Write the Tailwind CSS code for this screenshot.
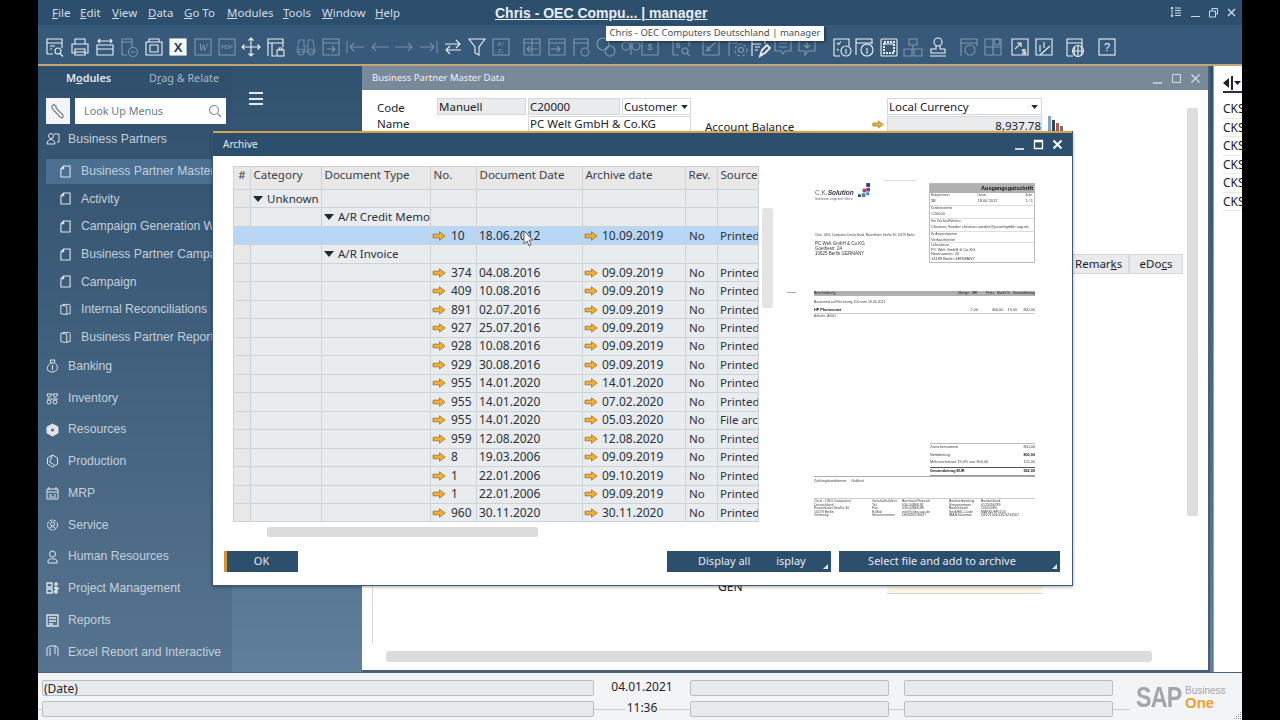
<!DOCTYPE html>
<html>
<head>
<meta charset="utf-8">
<script src="https://cdn.jsdelivr.net/npm/@tailwindcss/browser@4"></script>
</head>
<body class="bg-black">
<svg class="hidden">
  <symbol id="arr" viewBox="0 0 14 10"><path d="M1 3.2h6.5V.8L13 5 7.5 9.2V6.8H1z" fill="#f2ae35" stroke="#9c7426" stroke-width="0.8"/></symbol>
  <symbol id="doc" viewBox="0 0 12 14"><path d="M4 1h7v12H1V4zM4 1v3H1" fill="none" stroke="#dfe6ec" stroke-width="1.2"/></symbol>
  <symbol id="doc2" viewBox="0 0 13 14"><path d="M1 2l7 1v10l-7-1zM3 1h8l1 1v10H8" fill="none" stroke="#dfe6ec" stroke-width="1.1"/></symbol>
  <symbol id="tri" viewBox="0 0 10 6"><path d="M0 0h10L5 6z" fill="#1f2a33"/></symbol>
</svg>
<div class="relative w-[1280px] h-[720px] overflow-hidden bg-black">
 <div class="relative ml-[38px] w-[1204px] h-[720px] flex flex-col bg-[#f2f3f4] font-['Noto_Sans',sans-serif]">

  <!-- menu bar -->
  <header class="relative h-[25px] bg-[#2d4f6e] flex items-center pl-[14px] pt-px text-[11.5px] text-[#d3dce4] shrink-0">
    <nav class="flex">
      <span class="w-[28px]"><u>F</u>ile</span>
      <span class="w-[32px]"><u>E</u>dit</span>
      <span class="w-[36px]"><u>V</u>iew</span>
      <span class="w-[36px]"><u>D</u>ata</span>
      <span class="w-[43px]"><u>G</u>o To</span>
      <span class="w-[56px]"><u>M</u>odules</span>
      <span class="w-[39px]"><u>T</u>ools</span>
      <span class="w-[53px]"><u>W</u>indow</span>
      <span><u>H</u>elp</span>
    </nav>
    <div class="absolute left-[457px] top-[3px] text-[14px] font-bold text-[#e8eef3] underline font-['Liberation_Sans',sans-serif] whitespace-nowrap">Chris - OEC Compu... | manager</div>
    <div class="absolute right-[5px] top-[6px] flex items-center gap-[6px] text-[#cfd9e2]">
      <svg width="12" height="12" viewBox="0 0 12 12" fill="none" stroke="currentColor"><path d="M2 1v10M1 3l1-2 1 2M1 9l1 2 1-2M5 2h6M5 4.500h6M5 7h6M5 9.500h6"/></svg>
      <svg class="ml-[2px]" width="12" height="12" viewBox="0 0 12 12" fill="none" stroke="currentColor"><path d="M1 10.500h9"/></svg>
      <svg width="11" height="11" viewBox="0 0 11 11" fill="none" stroke="currentColor"><path d="M1.500 4h6v6h-6zM4 4V1.500h5.500V7H8"/></svg>
      <svg class="ml-[1px]" width="11" height="11" viewBox="0 0 11 11" fill="none" stroke="currentColor" stroke-width="1.400"><path d="M2 2l7 7M9 2l-7 7"/></svg>
    </div>
  </header>

  <!-- toolbar -->
  <div class="relative h-[39px] bg-[#37597a] flex items-center pl-[6px] pt-[5px] shrink-0 text-[#eef2f5] [&>svg]:w-[22px] [&>svg]:h-[22px] [&>svg]:shrink-0 [&>svg]:fill-none [&>svg]:stroke-current [&>svg]:[stroke-width:1.1]">
    <svg viewBox="0 0 22 22"><path d="M9 18H3V3h15v9M3 7h15M6 10h5M6 13h2"/><circle cx="14" cy="15" r="3"/><path d="M16 17.500l3 3"/></svg>
    <svg class="ml-[3px]" viewBox="0 0 22 22"><path d="M6 8V3h10v5M6 17H3V8h16v9h-3M6 13h10v6H6zM6 16h10"/></svg>
    <svg class="ml-[3px]" viewBox="0 0 22 22"><path d="M3 9h16v10H3zM3 13h16M4 5h14M6 3L4 5l2 2M16 3l2 2-2 2"/></svg>
    <svg class="ml-[2px] opacity-40" viewBox="0 0 22 22"><path d="M4 19V3h10v8M4 6h10M4 19h5"/><circle cx="15" cy="16" r="4.500"/><path d="M13 16h4"/></svg>
    <svg class="ml-[3px]" viewBox="0 0 22 22"><path d="M6 3h10v3H6zM3 6h16v13H3zM7 9h8v7H7z"/></svg>
    <svg class="ml-[2px]" viewBox="0 0 22 22"><rect x="3" y="3" width="16" height="16" fill="#f5f7f9" stroke="#fff"/><text x="11" y="16" text-anchor="middle" font-family="Liberation Sans" font-weight="700" font-size="13" fill="#23405c" stroke="none">X</text></svg>
    <svg class="ml-[3px] opacity-40" viewBox="0 0 22 22"><rect x="3" y="3" width="16" height="16"/><text x="11" y="15" text-anchor="middle" font-family="Liberation Serif" font-style="italic" font-size="11" fill="#fff" stroke="none">W</text></svg>
    <svg class="ml-[2px] opacity-40" viewBox="0 0 22 22"><rect x="3" y="3" width="16" height="16"/><text x="11" y="13" text-anchor="middle" font-family="Liberation Sans" font-size="6" fill="#fff" stroke="none">PDF</text></svg>
    <svg class="ml-[2px]" viewBox="0 0 22 22"><path d="M11 2v18M2 11h18M8.500 4.500L11 2l2.500 2.500M8.500 17.500L11 20l2.500-2.500M4.500 8.500L2 11l2.500 2.500M17.500 8.500L20 11l-2.500 2.500"/></svg>
    <svg class="ml-[3px]" viewBox="0 0 22 22"><path d="M3 20V3h15v8M3 7h15M7 7v13h4"/><rect x="12" y="14" width="7" height="6" fill="#37597a"/><path d="M14 14v-2h3v2"/></svg>
    <svg class="ml-[8px] opacity-30" viewBox="0 0 22 22"><path d="M4 4h5v6h4V4h5M4 4L2 16h8l-1-6M18 4l2 12h-8l1-6"/><circle cx="6" cy="16" r="3"/><circle cx="16" cy="16" r="3"/></svg>
    <svg class="ml-[3px] opacity-40" viewBox="0 0 22 22"><path d="M3 3h16v16H3zM3 7h16M7 13h8M12 10l3 3-3 3"/></svg>
    <svg class="ml-[2px] opacity-35" viewBox="0 0 22 22"><path d="M3 5v12M20 11H6M10 7l-4 4 4 4"/></svg>
    <svg class="ml-[3px] opacity-35" viewBox="0 0 22 22"><path d="M20 11H3M7 7l-4 4 4 4"/></svg>
    <svg class="ml-[2px] opacity-35" viewBox="0 0 22 22"><path d="M2 11h17M15 7l4 4-4 4"/></svg>
    <svg class="ml-[3px] opacity-35" viewBox="0 0 22 22"><path d="M19 5v12M2 11h14M12 7l4 4-4 4"/></svg>
    <svg class="ml-[2px]" viewBox="0 0 22 22"><path d="M3 8h15M14 4l4 4-4 4M19 14H4M8 10l-4 4 4 4"/></svg>
    <svg class="ml-[2px]" viewBox="0 0 22 22"><path d="M3 3h16l-6 8v8l-4-2v-6z"/></svg>
    <svg class="ml-[2px] opacity-40" viewBox="0 0 22 22"><rect x="3" y="3" width="16" height="16"/><text x="11" y="10" text-anchor="middle" font-family="Liberation Sans" font-size="6" fill="#fff" stroke="none">A↑</text><text x="11" y="17" text-anchor="middle" font-family="Liberation Sans" font-size="6" fill="#fff" stroke="none">Z↓</text></svg>
    <svg class="ml-[9px] opacity-40" viewBox="0 0 22 22"><path d="M3 3h16v16H3zM11 3v16M3 7h16M17 13H6M9 10l-3 3 3 3"/></svg>
    <svg class="ml-[3px] opacity-40" viewBox="0 0 22 22"><path d="M3 3h16v16H3zM3 7h16M5 13h9M11 10l3 3-3 3"/></svg>
    <svg class="ml-[3px] opacity-40" viewBox="0 0 22 22"><path d="M3 20V3h14v9M3 7h14"/><circle cx="14" cy="16" r="4"/></svg>
    <svg class="ml-[2px] opacity-40" viewBox="0 0 22 22"><circle cx="8" cy="8" r="6"/><circle cx="15" cy="15" r="5"/></svg>
    <svg class="ml-[3px] opacity-40" viewBox="0 0 22 22"><circle cx="6" cy="10" r="4"/><path d="M11 3v16"/><circle cx="16" cy="10" r="4"/></svg>
    <svg class="ml-[-3px] opacity-40" viewBox="0 0 22 22"><path d="M3 3h16v16H3z"/><text x="11" y="14" text-anchor="middle" font-family="Liberation Sans" font-size="9" fill="#fff" stroke="none">$</text></svg>
    <svg class="ml-[9px] opacity-40" viewBox="0 0 22 22"><path d="M9 19H3V3h16v7"/><text x="8" y="12" text-anchor="middle" font-family="Liberation Sans" font-size="8" fill="#fff" stroke="none">$</text><circle cx="15" cy="15" r="3"/><path d="M17 17l3 3"/></svg>
    <svg class="ml-[8px] opacity-40" viewBox="0 0 22 22"><path d="M3 3h16v16H3zM6 15L16 6M6 15l4-1-3-3"/></svg>
    <svg class="ml-[5px] opacity-40" viewBox="0 0 22 22"><path d="M2 20V3h9M2 7h9"/><circle cx="14" cy="14" r="2.500"/><circle cx="14" cy="14" r="6" stroke-dasharray="3 2"/></svg>
    <svg class="ml-[0px]" viewBox="0 0 22 22"><path d="M3 20V4h13v4M3 8h9M6 11h5M6 14h3"/><path d="M11 20l2-6 5-5 3 3-5 5z" stroke-width="1.800"/></svg>
    <svg class="ml-[1px] opacity-40" viewBox="0 0 22 22"><path d="M3 3h16v12h-6l-2 3-2-3H3zM7 7h8M7 11h8"/></svg>
    <svg class="ml-[2px] opacity-40" viewBox="0 0 22 22"><path d="M3 3h16v12H12l-3 4v-4H3zM11 6v6M8 9l3 3 3-3"/></svg>
    <svg class="ml-[13px]" viewBox="0 0 22 22"><path d="M3 9V3h15v7M3 20V9M3 20h6"/><path d="M6 7l1.500 1.500L10 5.500M6 13l1.500 1.500"/><circle cx="15" cy="15" r="5"/><path d="M15 13v5"/></svg>
    <svg class="ml-[0px]" viewBox="0 0 22 22"><path d="M3 19V3h16v5M3 7h16"/><circle cx="14" cy="14" r="6"/><path d="M14 12v6M14 9.800v.5"/></svg>
    <svg class="ml-[3px]" viewBox="0 0 22 22"><rect x="3" y="3" width="16" height="17" rx="1"/><rect x="6" y="6" width="10" height="11" stroke-dasharray="2 1" stroke-width="2"/><path d="M6 8h10"/></svg>
    <svg class="ml-[2px] opacity-40" viewBox="0 0 22 22"><path d="M7 3h8v6H7zM2 13h8v7H2zM12 13h8v7h-8zM11 9v4"/></svg>
    <svg class="ml-[3px]" viewBox="0 0 22 22"><circle cx="11" cy="6" r="4"/><path d="M9 10v3H4v4h14v-4h-5v-3M3 20h16"/></svg>
    <svg class="ml-[9px] opacity-40" viewBox="0 0 22 22"><path d="M3 20V3h16v7M3 7h16"/><circle cx="12" cy="14" r="5"/></svg>
    <svg class="ml-[2px] opacity-40" viewBox="0 0 22 22"><path d="M3 3h16v16H3zM11 3v16M3 11h16"/><circle cx="15" cy="6" r="3"/></svg>
    <svg class="ml-[5px]" viewBox="0 0 22 22"><path d="M3 3h16v16H3zM6 13l6-6M8 7h4v4"/><text x="15" y="18" text-anchor="middle" font-family="Liberation Sans" font-weight="700" font-size="8" fill="#fff" stroke="none">$</text></svg>
    <svg class="ml-[2px]" viewBox="0 0 22 22"><path d="M3 3h16v16H3zM7 9v7M11 6v6M7 19l10-9"/></svg>
    <svg class="ml-[9px]" viewBox="0 0 22 22"><path d="M3 20V3h15v8M3 7h15M3 20h6"/><circle cx="14" cy="15" r="5.500"/><path d="M8.500 15h11M14 9.500v11M11 11c-1.500 3-1.500 5 0 8M17 11c1.500 3 1.500 5 0 8"/></svg>
    <svg class="ml-[10px]" viewBox="0 0 22 22"><rect x="3" y="3" width="16" height="16"/><text x="11" y="15" text-anchor="middle" font-family="Liberation Sans" font-size="11" fill="#fff" stroke="none">?</text></svg>
    <div class="absolute left-[568px] top-[1px] h-[15px] w-[218px] bg-white shadow-[1px_1px_3px_rgba(0,0,0,.5)] flex items-center justify-center text-[9.5px] text-[#4a4f55] whitespace-nowrap">Chris - OEC Computers Deutschland | manager</div>
  </div>
  <div class="h-[2px] bg-[#c2a774] shrink-0"></div>

  <!-- main -->
  <main class="flex-1 min-h-0 flex bg-gradient-to-b from-[#30526f] to-[#5f7f9b]">
    <aside class="w-[194px] shrink-0 flex flex-col overflow-hidden bg-gradient-to-b from-[#2f4f6c] to-[#567490] font-['Liberation_Sans',sans-serif] text-[12.2px] text-[#c3cfda]">
     <div class="h-[590px] overflow-hidden flex flex-col">
      <div class="flex h-[24px] items-center font-['Noto_Sans',sans-serif] text-[10.8px] shrink-0 whitespace-nowrap">
        <span class="ml-[28px] font-semibold text-[#e3e9ee]">M<u>o</u>dules</span>
        <span class="ml-[38px] text-[#a9b8c6]">D<u>r</u>ag &amp; Relate</span>
      </div>
      <div class="flex mt-[8px] ml-[8px] gap-[5px] shrink-0">
        <div class="w-[24px] h-[26px] bg-[#f3f4f5] flex items-center justify-center">
          <svg width="16" height="16" viewBox="0 0 16 16" fill="none" stroke="#7a8086" stroke-width="1.200"><path d="M2 3l2-1.500L6 3v2l7 7v2l-1 1-2-1-6-6.500H4L2 5z"/></svg>
        </div>
        <div class="w-[151px] h-[26px] bg-white flex items-center justify-between pl-[9px] pr-[4px] font-['Noto_Sans',sans-serif] text-[10.8px] text-[#6f7a85]">
          <span>Look Up Menus</span>
          <svg width="14" height="14" viewBox="0 0 14 14" fill="none" stroke="#8a9199" stroke-width="1.200"><circle cx="6" cy="6" r="4.500"/><path d="M9.500 9.500L13 13"/></svg>
        </div>
      </div>
      <div class="flex items-center h-[30px] mt-[0px] pl-[8px] gap-[8px] shrink-0">
        <svg class="w-[14px] h-[14px] shrink-0" viewBox="0 0 14 14" fill="none" stroke="#dfe6ec"><circle cx="5" cy="4" r="2.500"/><path d="M1 12c0-6 8-6 8 0zM8 2h5v8h-2"/></svg>
        <span class="whitespace-nowrap">Business Partners</span>
      </div>
      <ul class="shrink-0 mt-[5px] [&>li]:flex [&>li]:items-center [&>li]:h-[27.7px] [&>li]:pl-[22px] [&>li]:gap-[10px] [&>li]:whitespace-nowrap [&_svg]:w-[11px] [&_svg]:h-[13px] [&_svg]:shrink-0">
        <li class="ml-[8px] !pl-[14px] !h-[25px] bg-[#4a6f91] mb-[1px]"><svg><use href="#doc"/></svg>Business Partner Master Data</li>
        <li><svg><use href="#doc"/></svg>Activity</li>
        <li><svg><use href="#doc"/></svg>Campaign Generation Wizard</li>
        <li><svg><use href="#doc"/></svg>Business Partner Campaign</li>
        <li><svg><use href="#doc"/></svg>Campaign</li>
        <li><svg><use href="#doc2"/></svg>Internal Reconciliations</li>
        <li><svg><use href="#doc2"/></svg>Business Partner Reports</li>
      </ul>
      <ul class="shrink-0 -mt-[1px] [&>li]:flex [&>li]:items-center [&>li]:h-[31.75px] [&>li]:pl-[8px] [&>li]:gap-[9px] [&>li]:whitespace-nowrap [&_svg]:w-[13px] [&_svg]:h-[14px] [&_svg]:shrink-0 [&_svg]:fill-none [&_svg]:stroke-[#dfe6ec]">
        <li><svg viewBox="0 0 13 14"><path d="M4 1h5L8 4H5zM5 4C0 7 0 13 6 13s7-6 3-9"/><path d="M6.500 6v5"/></svg>Banking</li>
        <li><svg viewBox="0 0 13 14"><path d="M1 3h5L4 6H2zM7 3h5l-2 3H8zM1 8h11"/><circle cx="3" cy="11" r="2"/><circle cx="9" cy="11" r="2"/></svg>Inventory</li>
        <li><svg viewBox="0 0 13 14"><path d="M6.500 1l5.500 3v6l-5.500 3L1 10V4z" fill="#dfe6ec"/><circle cx="6.500" cy="7" r="2" fill="#4b6b88"/></svg>Resources</li>
        <li><svg viewBox="0 0 13 14"><path d="M6.500 1l5 3v6l-5 3-5-3V4zM6.500 1l-3 7 5 3"/></svg>Production</li>
        <li><svg viewBox="0 0 13 14"><path d="M1 3h11v10H1zM3 1v3M10 1v3M1 6h11M3 9h3M8 9h2M3 11h7"/></svg>MRP</li>
        <li><svg viewBox="0 0 13 14"><circle cx="6.500" cy="7" r="5" stroke-dasharray="3 1"/><circle cx="6.500" cy="6" r="2"/><path d="M3 11c1-3 6-3 7 0"/></svg>Service</li>
        <li><svg viewBox="0 0 13 14"><circle cx="6.500" cy="4" r="3"/><path d="M2 13v-2c0-3 9-3 9 0v2z"/></svg>Human Resources</li>
        <li><svg viewBox="0 0 13 14" stroke-width="1.300"><path d="M1 2h5v4H1zM1 8h5v4H1zM8 3h4M8 7h4c1 2-4 2-4 4h4M10 1v12"/></svg>Project Management</li>
        <li><svg viewBox="0 0 13 14" stroke-width="1.300"><path d="M1 2h11v11H1zM3 5h7M3 8h7M3 11h4"/></svg>Reports</li>
        <li><svg viewBox="0 0 13 14"><path d="M1 13V3l3-2h6l2 2v10M4 13V3M9 1v8"/></svg>Excel Report and Interactive</li>
      </ul>
     </div>
    </aside>

    <div class="w-[130px] shrink-0 pt-[26px] pl-[17px]">
      <div class="w-[14px] h-[13px] border-y-[2px] border-[#e3e9ee] relative flex items-center"><div class="h-[2px] w-full bg-[#e3e9ee]"></div></div>
    </div>

    <!-- BP window -->
    <section class="relative w-[848px] shrink-0 bg-white flex flex-col border-b-[2px] border-r-[2px] border-[#4a5f72] text-[11.5px] text-[#1c2228]">
      <div class="h-[24px] bg-[#78899a] flex items-center justify-between pl-[10px] pr-[7px] text-[9.5px] text-[#eef1f4] shrink-0">
        <span>Business Partner Master Data</span>
        <div class="flex items-center gap-[8px] text-[#d3dae1]">
          <svg width="11" height="11" viewBox="0 0 11 11" fill="none" stroke="currentColor" stroke-width="1.500"><path d="M1 10h9"/></svg>
          <svg width="11" height="11" viewBox="0 0 11 11" fill="none" stroke="currentColor"><path d="M1.500 1.500h8v8h-8z"/></svg>
          <svg width="11" height="11" viewBox="0 0 11 11" fill="none" stroke="currentColor" stroke-width="1.300"><path d="M1.500 1.500l8 8M9.500 1.500l-8 8"/></svg>
        </div>
      </div>
      <div class="ml-[15px] mt-[8px] flex flex-col shrink-0 gap-[1px]">
        <div class="flex h-[17px] items-center">
          <span class="w-[60px] mt-[2px]">Code</span>
          <span class="w-[89px] h-full bg-[#e9ebed] border border-[#d5d8db] leading-[15px] pl-[1px]">Manuell</span>
          <span class="ml-[2px] w-[92px] h-full bg-[#e9ebed] border border-[#d5d8db] leading-[15px] pl-[1px]">C20000</span>
          <span class="ml-[2px] w-[69px] h-full bg-white border border-[#d5d8db] pl-[1px] flex items-center justify-between pr-[2px]">Customer<svg class="w-[7px] h-[4px]"><use href="#tri"/></svg></span>
          <span class="ml-[196px] w-[155px] h-full bg-white border border-[#d5d8db] pl-[1px] flex items-center justify-between pr-[3px]">Local Currency<svg class="w-[7px] h-[4px]"><use href="#tri"/></svg></span>
        </div>
        <div class="flex h-[16px] items-center">
          <span class="w-[151px]">Name</span>
          <span class="w-[163px] h-full bg-white border border-[#d5d8db] leading-[14px] pl-[1px]">PC Welt GmbH &amp; Co.KG</span>
          <span class="ml-[14px] w-[167px] mt-[5px]">Account Balance</span>
          <svg class="w-[12px] h-[9px] -ml-[0px]"><use href="#arr"/></svg>
          <span class="ml-[3px] w-[155px] h-full bg-[#e9ebed] border border-[#d5d8db] leading-[18px] text-right">8,937.78</span>
          <svg class="ml-[5px] -mt-[3px]" width="16" height="18" viewBox="0 0 16 18"><path d="M1 2h3v16H1z" fill="#7fa7c2"/><path d="M5 6h3v12H5z" fill="#3d4650"/><path d="M9 9h3v9H9z" fill="#b55f4a"/><path d="M13 12h3v6h-3z" fill="#6d7680"/></svg>
        </div>
      </div>
      <div class="mt-[122px] mr-[25px] flex justify-end shrink-0 h-[20px]">
        <span class="w-[57px] bg-[#e9ebed] border border-[#d5d8db] flex items-center pl-[2px]">Remar<u>k</u>s</span>
        <span class="w-[54px] bg-[#e9ebed] border border-[#d5d8db] flex items-center justify-center">eDo<u>c</u>s</span>
      </div>
      <div class="mt-[312px] flex h-[8px] shrink-0 overflow-hidden leading-[8px]">
        <span class="ml-[356px] w-[169px] text-[12px] -mt-[3px]">GEN</span>
        <span class="w-[155px] bg-[#fdf6e2] border-b border-[#d5d8db]"></span>
      </div>
      <div class="absolute right-[10px] top-[42px] w-[11px] h-[408px] rounded-[2px] bg-[#dddddd]"></div>
      <div class="absolute left-[24px] top-[585px] w-[766px] h-[11px] rounded-[3px] bg-[#dcdcdc]"></div>
      <div class="absolute left-[10px] top-[520px] bottom-[26px] w-px bg-[#d8dadc]"></div>
    </section>

    <!-- right strip -->
    <section class="ml-[3px] flex-1 bg-white overflow-hidden border-l border-[#8fa0b0] text-[12px] text-[#1c2228]">
      <div class="mt-[8px] ml-[9px] w-[20px] h-[19px] border-b-2 border-[#2a2f35] flex items-center gap-[1px]">
        <svg width="7" height="10" viewBox="0 0 7 10"><path d="M6 0L0 5l6 5z" fill="#1c2228"/></svg><span class="w-[2px] h-[14px] bg-[#1c2228]"></span>
        <svg width="7" height="4" viewBox="0 0 7 4"><path d="M0 0h7L3.500 4z" fill="#1c2228"/></svg>
      </div>
      <ul class="mt-[7px] ml-[9px] [&>li]:h-[18.500px] [&>li]:leading-[18px] [&>li]:border-b [&>li]:border-[#e6e8ea] [&>li]:whitespace-nowrap">
        <li>CKSolution</li><li>CKSolution</li><li>CKSolution</li><li>CKSolution</li><li>CKSolution</li><li>CKSolution</li>
      </ul>
    </section>
  </main>

  <!-- status bar -->
  <footer class="relative h-[48px] shrink-0 bg-[#f3f4f5] border-t border-[#4c6175] text-[12px] text-[#1f252b]">
    <div class="absolute left-0 right-[112px] top-[36px] h-px bg-[#c9cccf]"></div>
    <div class="relative pt-[7px] pl-[4px] flex flex-col gap-[5px]">
      <div class="flex h-[16px]">
        <span class="w-[552px] bg-[#e8ebee] border border-[#b9bec3] rounded-[2px] leading-[16px] pl-[1px]">(Date)</span>
        <span class="w-[96px] text-center leading-[14px]">04.01.2021</span>
        <span class="w-[199px] bg-[#e8ebee] border border-[#b9bec3] rounded-[2px]"></span>
        <span class="ml-[15px] w-[209px] bg-[#e8ebee] border border-[#b9bec3] rounded-[2px]"></span>
      </div>
      <div class="flex h-[16px]">
        <span class="w-[552px] bg-[#e8ebee] border border-[#b9bec3] rounded-[2px]"></span>
        <span class="w-[96px] text-center leading-[14px]"><span class="bg-[#f3f4f5] px-[2px]">11:36</span></span>
        <span class="w-[199px] bg-[#e8ebee] border border-[#b9bec3] rounded-[2px]"></span>
        <span class="ml-[15px] w-[209px] bg-[#e8ebee] border border-[#b9bec3] rounded-[2px]"></span>
      </div>
    </div>
    <div class="absolute left-[1098px] top-[12px] flex items-end font-['Liberation_Sans',sans-serif] h-[24px] bg-[#f3f4f5]">
      <span class="w-[47px] text-[29px] font-bold text-[#a3a5a8] leading-[24px] tracking-[-1px] origin-left scale-x-[.8] whitespace-nowrap">SAP</span>
      <div class="ml-[2px] flex flex-col leading-none">
        <span class="text-[10px] text-[#a3a5a8]">Business</span>
        <span class="text-[15px] font-bold text-[#e9a32f] leading-[13px]">One</span>
      </div>
    </div>
    <svg class="absolute right-0 bottom-0" width="9" height="9" viewBox="0 0 9 9" fill="#8a9096"><path d="M7 1h1v1H7zM5 3h1v1H5zM7 3h1v1H7zM3 5h1v1H3zM5 5h1v1H5zM7 5h1v1H7zM1 7h1v1H1zM3 7h1v1H3zM5 7h1v1H5zM7 7h1v1H7z"/></svg>
  </footer>

  <!-- Archive dialog -->
  <section class="absolute left-[174px] top-[131px] w-[861px] h-[455px] bg-white flex flex-col border-x border-b border-[#3c5a76] shadow-[0_1px_3px_rgba(0,0,0,.35)] text-[11.5px] text-[#2a3138]">
    <div class="h-[25px] shrink-0 bg-[#2d4f6e] border-t-[2px] border-[#d2a24c] flex items-center justify-between pl-[10px] pr-[9px] text-[10px] text-[#e3e9ee]">
      <span>Archive</span>
      <div class="flex items-center gap-[8px] text-white">
        <svg width="11" height="11" viewBox="0 0 11 11" fill="none" stroke="currentColor" stroke-width="1.500"><path d="M1 10h9"/></svg>
        <svg width="11" height="11" viewBox="0 0 11 11" fill="none" stroke="currentColor" stroke-width="1.300"><path d="M1.500 1.500h8v8h-8zM1.500 2.500h8"/></svg>
        <svg width="11" height="11" viewBox="0 0 11 11" fill="none" stroke="currentColor" stroke-width="1.800"><path d="M1.500 1.500l8 8M9.500 1.500l-8 8"/></svg>
      </div>
    </div>

    <div class="relative flex-1 min-h-0">
      <!-- grid -->
      <div class="absolute left-[20px] top-[10px] w-[526px] border-l border-t border-[#cfd2d4] whitespace-nowrap overflow-hidden
        [&>div]:grid [&>div]:grid-cols-[17px_71px_109px_46px_106px_103px_32px_41px] [&>div]:h-[18.47px]
        [&>div>span]:border-r [&>div>span]:border-b [&>div>span]:border-[#cfd2d4] [&>div>span]:bg-[#e9ecef] [&>div>span]:overflow-hidden [&>div>span]:leading-[18px] [&>div>span]:flex [&>div>span]:items-center
        [&>div>span:first-child]:bg-[#e8e8e8]
        [&>div>span:nth-child(4)]:text-[12px] [&>div>span:nth-child(5)]:text-[12px] [&>div>span:nth-child(6)]:text-[12px]
        [&_svg.a]:w-[14px] [&_svg.a]:h-[10px] [&_svg.a]:shrink-0 [&_svg.t]:w-[10px] [&_svg.t]:h-[6px] [&_svg.t]:shrink-0">
        <div class="!h-[23px] [&>span]:!bg-[#e8e8e8] [&>span]:pl-[2.5px] [&>span]:!text-[11.5px] [&>span]:!items-start [&>span]:!leading-[15px] [&>span]:text-[#3a4047]">
          <span class="justify-center !pl-0">#</span><span>Category</span><span>Document Type</span><span>No.</span><span>Document Date</span><span>Archive date</span><span>Rev.</span><span>Source</span>
        </div>
        <div><span></span><span class="pl-[2px] gap-[4px]"><svg class="t"><use href="#tri"/></svg>Unknown</span><span></span><span></span><span></span><span></span><span></span><span></span></div>
        <div><span></span><span></span><span class="pl-[2px] gap-[4px]"><svg class="t"><use href="#tri"/></svg>A/R Credit Memo</span><span></span><span></span><span></span><span></span><span></span></div>
        <div class="[&>span]:!bg-[#b8d6f6]"><span class="!bg-[#a7b4c1]"></span><span></span><span></span><span class="pl-px gap-[5px]"><svg class="a"><use href="#arr"/></svg>10</span><span class="pl-[2px]">18.06.2012</span><span class="pl-px gap-[4px]"><svg class="a"><use href="#arr"/></svg>10.09.2019</span><span class="pl-[3px]">No</span><span class="pl-[2px]">Printed</span></div>
        <div><span></span><span></span><span class="pl-[2px] gap-[4px]"><svg class="t"><use href="#tri"/></svg>A/R Invoice</span><span></span><span></span><span></span><span></span><span></span></div>
        <div><span></span><span></span><span></span><span class="pl-px gap-[5px]"><svg class="a"><use href="#arr"/></svg>374</span><span class="pl-[2px]">04.08.2016</span><span class="pl-px gap-[4px]"><svg class="a"><use href="#arr"/></svg>09.09.2019</span><span class="pl-[3px]">No</span><span class="pl-[2px]">Printed</span></div>
        <div><span></span><span></span><span></span><span class="pl-px gap-[5px]"><svg class="a"><use href="#arr"/></svg>409</span><span class="pl-[2px]">10.08.2016</span><span class="pl-px gap-[4px]"><svg class="a"><use href="#arr"/></svg>09.09.2019</span><span class="pl-[3px]">No</span><span class="pl-[2px]">Printed</span></div>
        <div><span></span><span></span><span></span><span class="pl-px gap-[5px]"><svg class="a"><use href="#arr"/></svg>891</span><span class="pl-[2px]">02.07.2016</span><span class="pl-px gap-[4px]"><svg class="a"><use href="#arr"/></svg>09.09.2019</span><span class="pl-[3px]">No</span><span class="pl-[2px]">Printed</span></div>
        <div><span></span><span></span><span></span><span class="pl-px gap-[5px]"><svg class="a"><use href="#arr"/></svg>927</span><span class="pl-[2px]">25.07.2016</span><span class="pl-px gap-[4px]"><svg class="a"><use href="#arr"/></svg>09.09.2019</span><span class="pl-[3px]">No</span><span class="pl-[2px]">Printed</span></div>
        <div><span></span><span></span><span></span><span class="pl-px gap-[5px]"><svg class="a"><use href="#arr"/></svg>928</span><span class="pl-[2px]">10.08.2016</span><span class="pl-px gap-[4px]"><svg class="a"><use href="#arr"/></svg>09.09.2019</span><span class="pl-[3px]">No</span><span class="pl-[2px]">Printed</span></div>
        <div><span></span><span></span><span></span><span class="pl-px gap-[5px]"><svg class="a"><use href="#arr"/></svg>929</span><span class="pl-[2px]">30.08.2016</span><span class="pl-px gap-[4px]"><svg class="a"><use href="#arr"/></svg>09.09.2019</span><span class="pl-[3px]">No</span><span class="pl-[2px]">Printed</span></div>
        <div><span></span><span></span><span></span><span class="pl-px gap-[5px]"><svg class="a"><use href="#arr"/></svg>955</span><span class="pl-[2px]">14.01.2020</span><span class="pl-px gap-[4px]"><svg class="a"><use href="#arr"/></svg>14.01.2020</span><span class="pl-[3px]">No</span><span class="pl-[2px]">Printed</span></div>
        <div><span></span><span></span><span></span><span class="pl-px gap-[5px]"><svg class="a"><use href="#arr"/></svg>955</span><span class="pl-[2px]">14.01.2020</span><span class="pl-px gap-[4px]"><svg class="a"><use href="#arr"/></svg>07.02.2020</span><span class="pl-[3px]">No</span><span class="pl-[2px]">Printed</span></div>
        <div><span></span><span></span><span></span><span class="pl-px gap-[5px]"><svg class="a"><use href="#arr"/></svg>955</span><span class="pl-[2px]">14.01.2020</span><span class="pl-px gap-[4px]"><svg class="a"><use href="#arr"/></svg>05.03.2020</span><span class="pl-[3px]">No</span><span class="pl-[2px]">File arch</span></div>
        <div><span></span><span></span><span></span><span class="pl-px gap-[5px]"><svg class="a"><use href="#arr"/></svg>959</span><span class="pl-[2px]">12.08.2020</span><span class="pl-px gap-[4px]"><svg class="a"><use href="#arr"/></svg>12.08.2020</span><span class="pl-[3px]">No</span><span class="pl-[2px]">Printed</span></div>
        <div><span></span><span></span><span></span><span class="pl-px gap-[5px]"><svg class="a"><use href="#arr"/></svg>8</span><span class="pl-[2px]">19.03.2006</span><span class="pl-px gap-[4px]"><svg class="a"><use href="#arr"/></svg>09.09.2019</span><span class="pl-[3px]">No</span><span class="pl-[2px]">Printed</span></div>
        <div><span></span><span></span><span></span><span class="pl-px gap-[5px]"><svg class="a"><use href="#arr"/></svg>1</span><span class="pl-[2px]">22.01.2006</span><span class="pl-px gap-[4px]"><svg class="a"><use href="#arr"/></svg>09.10.2019</span><span class="pl-[3px]">No</span><span class="pl-[2px]">Printed</span></div>
        <div><span></span><span></span><span></span><span class="pl-px gap-[5px]"><svg class="a"><use href="#arr"/></svg>1</span><span class="pl-[2px]">22.01.2006</span><span class="pl-px gap-[4px]"><svg class="a"><use href="#arr"/></svg>09.09.2019</span><span class="pl-[3px]">No</span><span class="pl-[2px]">Printed</span></div>
        <div><span></span><span></span><span></span><span class="pl-px gap-[5px]"><svg class="a"><use href="#arr"/></svg>960</span><span class="pl-[2px]">30.11.2020</span><span class="pl-px gap-[4px]"><svg class="a"><use href="#arr"/></svg>30.11.2020</span><span class="pl-[3px]">No</span><span class="pl-[2px]">Printed</span></div>
      </div>
      <!-- scrollbars -->
      <div class="absolute left-[54px] top-[371px] w-[271px] h-[10px] rounded-[2px] bg-[#dcdcdc]"></div>
      <div class="absolute left-[549px] top-[52px] w-[11px] h-[100px] rounded-[2px] bg-[#e4e4e4]"></div>
      <!-- cursor -->
      <svg class="absolute left-[310px] top-[74px]" width="12" height="18" viewBox="0 0 12 18"><path d="M1 1v13l3-3 2 5 2-1-2-5h4z" fill="#fff" stroke="#5c636a"/></svg>

      <!-- preview thumbnail -->
      <div class="absolute left-[575px] top-[20px] w-[256px] h-[355px] font-['Liberation_Sans',sans-serif] text-[#444] text-[4px] leading-[4.400px] whitespace-nowrap blur-[0.3px]">
        <div class="absolute left-[95px] top-[4px] w-[34px] h-px bg-[#ddd]"></div>
        <div class="absolute left-[27px] top-[12px] text-[6.500px] leading-[9px] text-[#667]">C.K.<b class="italic text-[#334]">Solution</b></div>
        <div class="absolute left-[27px] top-[21px] text-[3.500px] text-[#667]">Software engineer office</div>
        <svg class="absolute left-[70px] top-[7px]" width="13" height="16" viewBox="0 0 14 17"><path d="M9 0h4v4H9z" fill="#223a6e"/><path d="M9 5h4v4H9z" fill="#6a4aa0"/><path d="M5 6h4v4H5z" fill="#c23a6a"/><path d="M9 10h3v3H9z" fill="#3a7ab0"/><path d="M4 11h4v4H4z" fill="#3a8ab0"/><path d="M0 12h3v3H0z" fill="#444"/></svg>
        <div class="absolute left-[141px] top-[7px] w-[106px] h-[80px] border border-[#bbb] overflow-hidden">
          <div class="h-[9px] bg-[#b0b0b0] text-right pr-[1px] text-[5.500px] leading-[9px] font-bold text-[#111]">Ausgangsgutschrift</div>
          <div class="px-[1px] h-[13px] border-b border-[#ddd] flex justify-between text-[3px] leading-[5px]"><div>Belegnummer<br><b class="text-[4px]">10</b></div><div>Datum<br><span class="text-[4px]">18.06.2012</span></div><div>Seite<br><span class="text-[4px]">1 / 1</span></div></div>
          <div class="px-[1px] h-[13px] border-b border-[#ddd] text-[3px] leading-[5px]">Kundennummer<br><span class="text-[4px]">C20000</span></div>
          <div class="px-[1px] h-[13px] border-b border-[#ddd] text-[3px] leading-[5px]">Ihre Zeichen/Referenz<br><span class="text-[4px]">Christian Sander christian.sander@pcweltgmbh.sap.de</span></div>
          <div class="px-[1px] h-[11px] border-b border-[#ddd] text-[3px] leading-[5px]">Ihr Ansprechpartner<br><span class="text-[4px]">Verkaufsleiter</span></div>
          <div class="px-[1px] text-[3px] leading-[4.500px]">Lieferadresse<br><span class="text-[4px]">PC Welt GmbH &amp; Co.KG<br>Neumannstr. 20<br>13189 Berlin GERMANY</span></div>
        </div>
        <div class="absolute left-[27px] top-[57px] text-[3px]">Chris, USG, Computers Deutschland, Rosenthaler Straße 30, 10178 Berlin</div>
        <div class="absolute left-[27px] top-[65px] text-[4.500px] leading-[5px] text-[#333]">PC Welt GmbH &amp; Co.KG<br>Goethestr. 24<br>10625 Berlin GERMANY</div>
        <div class="absolute left-[-1px] top-[116px] w-[9px] h-px bg-[#aaa]"></div>
        <div class="absolute left-[26px] top-[115px] w-[221px] h-[5px] bg-[#b0b0b0] text-[3.500px] leading-[5px] text-[#222] flex justify-between"><span>Beschreibung</span><span>Menge &nbsp; ME &nbsp;&nbsp;&nbsp;&nbsp;&nbsp;&nbsp;&nbsp; Preis &nbsp; MwSt % &nbsp; Gesamtbetrag</span></div>
        <div class="absolute left-[26px] top-[124px] text-[3.500px]">Basierend auf Rechnung 100 vom 18.06.2012</div>
        <div class="absolute left-[26px] top-[132px] w-[221px] border-b border-[#ccc] flex justify-between text-[3.800px] leading-[5px]"><b class="text-[#111]">HP Photosmart</b><span>2,00 &nbsp;&nbsp;&nbsp;&nbsp;&nbsp;&nbsp;&nbsp;&nbsp;&nbsp;&nbsp;&nbsp; 400,00 &nbsp;&nbsp; 19,00 &nbsp;&nbsp;&nbsp;&nbsp; 800,00</span></div>
        <div class="absolute left-[26px] top-[138px] text-[3px]">Artikelnr.: A0001</div>
        <div class="absolute left-[142px] top-[267px] w-[105px] border-t border-[#bbb] text-[3.800px] leading-[7.500px]">
          <div class="flex justify-between"><span>Zwischensumme</span><span>800,00</span></div>
          <div class="flex justify-between"><span>Nettobetrag</span><b class="text-[#111]">800,00</b></div>
          <div class="flex justify-between border-b border-[#555]"><span>Mehrwertsteuer 19,0% von 800,00</span><span>152,00</span></div>
          <div class="flex justify-between border-b border-[#999]"><b class="text-[#111]">Gesamtbetrag EUR</b><b class="text-[#111]">952,00</b></div>
        </div>
        <div class="absolute left-[26px] top-[300px] w-[221px] h-px bg-[#aaa]"></div>
        <div class="absolute left-[26px] top-[303px] text-[3.500px]">Zahlungskonditionen: &nbsp;&nbsp; Gültikeit</div>
        <div class="absolute left-[26px] top-[322px] w-[221px] flex border-t border-[#ccc] pt-[1px] text-[3.500px] leading-[3.600px]">
          <div class="w-[58px]">Chris - USG Computers<br>Deutschland<br>Rosenthaler Straße 30<br>10178 Berlin<br>Germany</div>
          <div class="w-[30px]">Geschäftsführer<br>Tel.<br>Fax<br>E-Mail<br>Steuernummer</div>
          <div class="w-[47px]">Bernhard Heinrich<br>030-34868-81<br>030-34868-86<br>info@ckbs.sap.de<br>DE4090O300O</div>
          <div class="w-[32px]">Bankverbindung<br>Kontonummer<br>Bankleitzahl<br>Swift/BIC-Code<br>IBAN-Nummer</div>
          <div>Bundesbank<br>0123456789<br>10010080<br>MARKDEF1100<br>DE22100100801234567</div>
        </div>
      </div>

      <!-- buttons -->
      <div class="absolute left-0 right-0 top-[395px] flex font-['Noto_Sans',sans-serif] text-[11px] text-[#e3e9ee] pl-[11px] pr-[12px] [&>button]:h-[21px] [&>button]:bg-[#2d4f6e] [&>button]:relative">
        <button class="w-[74px] border-l-[3px] border-[#d7942e] pr-[2px]">OK</button>
        <button class="ml-[369px] w-[164px] whitespace-nowrap text-left pl-[31px]">Display all<span class="ml-[26px]">isplay</span><svg class="absolute right-[3px] bottom-[3px]" width="5" height="5" viewBox="0 0 5 5"><path d="M5 0v5H0z" fill="#dfe6ec"/></svg></button>
        <button class="ml-[8px] w-[221px] pr-[15px]">Select file and add to archive<svg class="absolute right-[3px] bottom-[3px]" width="5" height="5" viewBox="0 0 5 5"><path d="M5 0v5H0z" fill="#dfe6ec"/></svg></button>
      </div>
    </div>
  </section>
 </div>
</div>
</body>
</html>
